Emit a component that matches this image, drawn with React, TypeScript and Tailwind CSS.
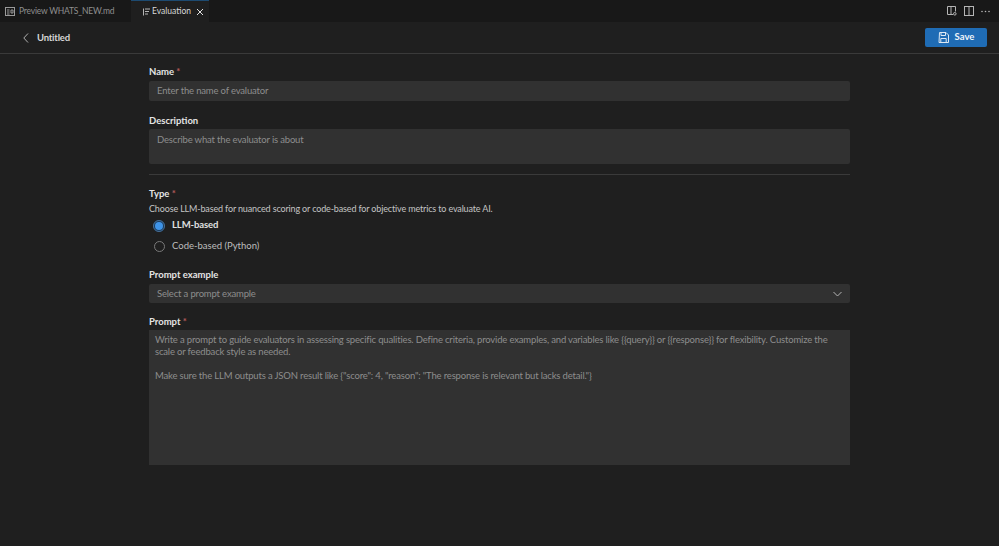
const labelCls = "block text-[9.5px] leading-[14px] font-bold text-[#e4e4e4]";
const fieldCls = "bg-[#313131] rounded-[2px] text-[9.5px] tracking-[-0.17px] text-[#8d8d8d]";

const Required = () => <span className="text-[#b35a5a]">*</span>;

const Radio = ({ checked, label }: { checked?: boolean; label: string }) => (
  <div className="flex items-center h-[21px] pl-[5px]">
    {checked ? (
      <span className="h-[8px] w-[8px] m-[1px] rounded-full bg-[#3f94e8] ring-[2px] ring-[#16395c] outline outline-1 outline-[#4a6f94] outline-offset-[1px]" />
    ) : (
      <span className="h-[11px] w-[11px] rounded-full border border-[#7a7a7a]" />
    )}
    <span
      className={
        checked
          ? "ml-[8px] text-[9.5px] font-bold tracking-[-0.1px] text-[#e0e0e0]"
          : "ml-[7px] text-[9.5px] text-[#bdbdbd]"
      }
    >
      {label}
    </span>
  </div>
);

export default function App() {
  return (
    <div className="h-[546px] w-[999px] overflow-hidden bg-[#1f1f1f] font-['Lato','Noto_Sans',sans-serif]">
      {/* tab bar */}
      <div className="flex h-[22px] items-stretch bg-[#181818]">
        <div className="flex w-[131px] shrink-0 items-center whitespace-nowrap pl-[5px] text-[8.5px] tracking-[-0.2px] text-[#8f8f8f]">
          <svg width="10" height="9" viewBox="0 0 10 9" fill="none" stroke="#9a9a9a" strokeWidth="1">
            <rect x="0.5" y="0.5" width="9" height="8" />
            <path d="M2 3h2.5M2 5h2.5M2 7h2.5M6 3h2v3h-2z" />
          </svg>
          <span className="ml-[4px]">Preview WHATS_NEW.md</span>
        </div>
        <div className="flex w-[78px] items-center border-t border-[#1d4a70] bg-[#1f1f1f] pl-[12px] text-[8.5px] text-[#d8d8d8]">
          <svg width="7" height="8" viewBox="0 0 7 8" fill="none" stroke="#b5b5b5" strokeWidth="1">
            <path d="M0.5 0.5v7M2 1h5M2 3.5h4M2 6h3" />
          </svg>
          <span className="ml-[2px]">Evaluation</span>
          <svg className="ml-[5px]" width="8" height="8" viewBox="0 0 8 8" fill="none" stroke="#e0e0e0" strokeWidth="1">
            <path d="M1 1l6 6M7 1L1 7" />
          </svg>
        </div>
        <div className="ml-auto flex items-center gap-[7px] pr-[9px]">
          <svg width="10" height="10" viewBox="0 0 10 10" fill="none" stroke="#b5b5b5" strokeWidth="1">
            <path d="M6 8.5H0.5v-8h8v5M4 0.5v8" />
            <circle cx="7.8" cy="7.8" r="1.3" />
          </svg>
          <svg width="10" height="10" viewBox="0 0 10 10" fill="none" stroke="#b5b5b5" strokeWidth="1">
            <rect x="0.5" y="0.5" width="9" height="9" />
            <path d="M5 0.5v9" />
          </svg>
          <svg width="9" height="3" viewBox="0 0 9 3" fill="#b5b5b5">
            <circle cx="1" cy="1.5" r="0.8" />
            <circle cx="4.5" cy="1.5" r="0.8" />
            <circle cx="8" cy="1.5" r="0.8" />
          </svg>
        </div>
      </div>

      {/* header */}
      <div className="flex h-[32px] items-center border-b border-[#3a3a3a] pl-[23px] pr-[12px]">
        <svg width="6" height="10" viewBox="0 0 6 10" fill="none" stroke="#b0b0b0" strokeWidth="1">
          <path d="M5 0.5L0.8 5L5 9.5" />
        </svg>
        <span className="ml-[8px] text-[9.5px] font-bold tracking-[-0.2px] text-[#d6d6d6] pt-[1px]">Untitled</span>
        <button className="ml-auto flex h-[19px] w-[62px] items-center justify-center gap-[6px] rounded-[2px] bg-[#1f6cb5] text-[9.5px] font-bold text-[#eef4fa]">
          <svg width="11" height="11" viewBox="0 0 11 11" fill="none" stroke="#dce8f3" strokeWidth="1">
            <path d="M1.5 0.5h6.5l2.5 2.5v7.5h-9.5z" />
            <path d="M3 0.5v3h4.5v-3M2.8 10.5v-4h5.4v4" />
          </svg>
          Save
        </button>
      </div>

      {/* form */}
      <div className="ml-[149px] w-[701px] pt-[11px]">
        <label className={labelCls}>
          Name <Required />
        </label>
        <div className={`${fieldCls} mt-[2px] flex h-[20px] items-center px-[8px] pt-[1px]`}>Enter the name of evaluator</div>

        <label className={`${labelCls} mt-[13px]`}>Description</label>
        <div className={`${fieldCls} mt-[1px] h-[35px] px-[8px] pt-[3px] leading-[15px]`}>Describe what the evaluator is about</div>

        <div className="mt-[10px] h-px bg-[#3a3a3a]" />

        <label className={`${labelCls} mt-[12px]`}>
          Type <Required />
        </label>
        <p className="mt-[1px] text-[9px] leading-[14px] tracking-[-0.15px] text-[#c4c4c4]">
          Choose LLM-based for nuanced scoring or code-based for objective metrics to evaluate AI.
        </p>
        <div className="-mt-[1px]">
          <Radio checked label="LLM-based" />
          <Radio label="Code-based (Python)" />
        </div>

        <label className={`${labelCls} mt-[11px]`}>Prompt example</label>
        <div className={`${fieldCls} mt-[2px] flex h-[19px] items-center justify-between pl-[8px] pr-[8px] pt-[1px]`}>
          Select a prompt example
          <svg width="9" height="6" viewBox="0 0 9 6" fill="none" stroke="#b5b5b5" strokeWidth="1">
            <path d="M0.5 1l4 4l4-4" />
          </svg>
        </div>

        <label className={`${labelCls} mt-[12px]`}>
          Prompt <Required />
        </label>
        <div className={`${fieldCls} mt-[1px] h-[135px] rounded-none pl-[6px] pr-[14px] pt-[4px] leading-[12px]`}>
          <p>
            {"Write a prompt to guide evaluators in assessing specific qualities. Define criteria, provide examples, and variables like {{query}} or {{response}} for flexibility. Customize the scale or feedback style as needed."}
          </p>
          <p className="mt-[12px]">
            {'Make sure the LLM outputs a JSON result like {"score": 4, "reason": "The response is relevant but lacks detail."}'}
          </p>
        </div>
      </div>
    </div>
  );
}
